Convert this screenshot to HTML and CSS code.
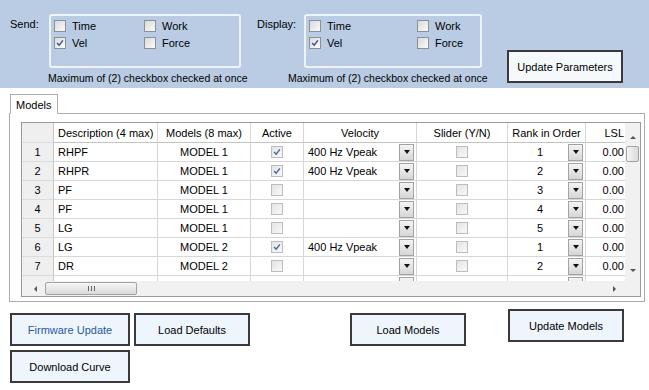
FILE: index.html
```html
<!DOCTYPE html>
<html>
<head>
    <title>Models</title>
    <link rel="stylesheet" href="styles.css">
</head>
<body>

<div class="band">
    <div class="param send">
        <span class="param-label">Send:</span>
        <div class="param-body">
            <div class="group">
                <label class="opt"><span class="cb"></span>Time</label>
                <label class="opt"><span class="cb"></span>Work</label>
                <label class="opt"><span class="cb on"><svg viewBox="0 0 12 12"><path d="M2.5 6 L5 8.6 L9.5 2.8"/></svg></span>Vel</label>
                <label class="opt"><span class="cb"></span>Force</label>
            </div>
            <div class="note">Maximum of (2) checkbox checked at once</div>
        </div>
    </div>
    <div class="param display">
        <span class="param-label">Display:</span>
        <div class="param-body">
            <div class="group">
                <label class="opt"><span class="cb"></span>Time</label>
                <label class="opt"><span class="cb"></span>Work</label>
                <label class="opt"><span class="cb on"><svg viewBox="0 0 12 12"><path d="M2.5 6 L5 8.6 L9.5 2.8"/></svg></span>Vel</label>
                <label class="opt"><span class="cb"></span>Force</label>
            </div>
            <div class="note">Maximum of (2) checkbox checked at once</div>
        </div>
    </div>
    <button class="btn btn-params">Update Parameters</button>
</div>

<div class="tabs">
    <div class="tab">Models</div>
    <div class="panel">
        <div class="grid">
            <div class="grid-main">
                <div class="viewport">
                    <div class="row head">
                        <div class="c rh"></div>
                        <div class="c">Description (4 max)</div>
                        <div class="c mid">Models (8 max)</div>
                        <div class="c mid">Active</div>
                        <div class="c mid">Velocity</div>
                        <div class="c mid">Slider (Y/N)</div>
                        <div class="c mid">Rank in Order</div>
                        <div class="c num">LSL</div>
                    </div>
                    <div class="row">
                        <div class="c rh">1</div>
                        <div class="c">RHPF</div>
                        <div class="c mid">MODEL 1</div>
                        <div class="c mid"><span class="gcb on"><svg viewBox="0 0 12 12"><path d="M2.5 6 L5 8.6 L9.5 2.8"/></svg></span></div>
                        <div class="c combo"><span>400 Hz Vpeak</span><i class="dd"></i></div>
                        <div class="c mid"><span class="gcb"></span></div>
                        <div class="c combo rank"><span>1</span><i class="dd"></i></div>
                        <div class="c num">0.00</div>
                    </div>
                    <div class="row">
                        <div class="c rh">2</div>
                        <div class="c">RHPR</div>
                        <div class="c mid">MODEL 1</div>
                        <div class="c mid"><span class="gcb on"><svg viewBox="0 0 12 12"><path d="M2.5 6 L5 8.6 L9.5 2.8"/></svg></span></div>
                        <div class="c combo"><span>400 Hz Vpeak</span><i class="dd"></i></div>
                        <div class="c mid"><span class="gcb"></span></div>
                        <div class="c combo rank"><span>2</span><i class="dd"></i></div>
                        <div class="c num">0.00</div>
                    </div>
                    <div class="row">
                        <div class="c rh">3</div>
                        <div class="c">PF</div>
                        <div class="c mid">MODEL 1</div>
                        <div class="c mid"><span class="gcb"></span></div>
                        <div class="c combo"><span></span><i class="dd"></i></div>
                        <div class="c mid"><span class="gcb"></span></div>
                        <div class="c combo rank"><span>3</span><i class="dd"></i></div>
                        <div class="c num">0.00</div>
                    </div>
                    <div class="row">
                        <div class="c rh">4</div>
                        <div class="c">PF</div>
                        <div class="c mid">MODEL 1</div>
                        <div class="c mid"><span class="gcb"></span></div>
                        <div class="c combo"><span></span><i class="dd"></i></div>
                        <div class="c mid"><span class="gcb"></span></div>
                        <div class="c combo rank"><span>4</span><i class="dd"></i></div>
                        <div class="c num">0.00</div>
                    </div>
                    <div class="row">
                        <div class="c rh">5</div>
                        <div class="c">LG</div>
                        <div class="c mid">MODEL 1</div>
                        <div class="c mid"><span class="gcb"></span></div>
                        <div class="c combo"><span></span><i class="dd"></i></div>
                        <div class="c mid"><span class="gcb"></span></div>
                        <div class="c combo rank"><span>5</span><i class="dd"></i></div>
                        <div class="c num">0.00</div>
                    </div>
                    <div class="row">
                        <div class="c rh">6</div>
                        <div class="c">LG</div>
                        <div class="c mid">MODEL 2</div>
                        <div class="c mid"><span class="gcb on"><svg viewBox="0 0 12 12"><path d="M2.5 6 L5 8.6 L9.5 2.8"/></svg></span></div>
                        <div class="c combo"><span>400 Hz Vpeak</span><i class="dd"></i></div>
                        <div class="c mid"><span class="gcb"></span></div>
                        <div class="c combo rank"><span>1</span><i class="dd"></i></div>
                        <div class="c num">0.00</div>
                    </div>
                    <div class="row">
                        <div class="c rh">7</div>
                        <div class="c">DR</div>
                        <div class="c mid">MODEL 2</div>
                        <div class="c mid"><span class="gcb"></span></div>
                        <div class="c combo"><span></span><i class="dd"></i></div>
                        <div class="c mid"><span class="gcb"></span></div>
                        <div class="c combo rank"><span>2</span><i class="dd"></i></div>
                        <div class="c num">0.00</div>
                    </div>
                    <!-- next row, only its top edge shows above the scrollbar -->
                    <div class="row">
                        <div class="c rh"></div>
                        <div class="c"></div>
                        <div class="c mid"></div>
                        <div class="c mid"></div>
                        <div class="c combo"><span></span><i class="dd"></i></div>
                        <div class="c mid"></div>
                        <div class="c combo rank"><span></span><i class="dd"></i></div>
                        <div class="c num"></div>
                    </div>
                </div>
                <div class="vscroll">
                    <i class="arr up"></i>
                    <span class="vthumb"></span>
                    <i class="arr down"></i>
                </div>
            </div>
            <div class="grid-foot">
                <div class="hscroll">
                    <i class="arr left"></i>
                    <span class="hthumb"><b></b><b></b><b></b></span>
                    <i class="arr right"></i>
                </div>
                <div class="corner"></div>
            </div>
        </div>
    </div>
</div>

<div class="actions">
    <div class="stack">
        <button class="btn btn-blue">Firmware Update</button>
        <button class="btn">Download Curve</button>
    </div>
    <button class="btn btn-defaults">Load Defaults</button>
    <button class="btn btn-load">Load Models</button>
    <button class="btn btn-update">Update Models</button>
</div>

</body>
</html>
```

FILE: styles.css
```css
body {
    margin: 0;
    padding: 0;
    background: #fff;
    color: #000;
    font-family: 'Liberation Sans', Arial, sans-serif;
    font-size: 11px;
}

/* top parameter band */
.band {
    display: flex;
    align-items: flex-start;
    height: 88px;
    box-sizing: border-box;
    padding: 14px 0 0 10px;
    background: #b9cce3;
}
.param {
    display: flex;
    align-items: flex-start;
}
.param-label {
    padding-top: 4px;
}
.send .param-label { width: 39px; }
.send .param-body { width: 199px; }
.send .group { width: 192px; }
.send .note { margin-left: -1px; }

.display { margin-left: 9px; }
.display .param-label { width: 47px; }
.display .param-body { width: 178px; }
.display .group { width: 178px; grid-template-columns: 108px 1fr; }
.display .note { margin-left: -16px; }

.group {
    display: grid;
    grid-template-columns: 90px 1fr;
    grid-auto-rows: 17px;
    height: 54px;
    box-sizing: border-box;
    padding: 1px 0 0 3px;
    border: 2px solid #eef3f9;
    border-radius: 3px;
}
.opt {
    display: flex;
    align-items: center;
}
.cb {
    width: 12px;
    height: 12px;
    box-sizing: border-box;
    margin-right: 6px;
    border: 1px solid #8d8f92;
    background: linear-gradient(135deg, #d9dadc, #fafafa);
    display: inline-flex;
}
.cb svg, .gcb svg {
    width: 100%;
    height: 100%;
    fill: none;
    stroke: #2f4f8f;
    stroke-width: 1.6;
}
.note {
    margin-top: 4px;
    white-space: nowrap;
    line-height: 13px;
    font-size: 10.5px;
}

.btn {
    font-family: 'Liberation Sans', Arial, sans-serif;
    font-size: 11px;
    color: #000;
    background: #eef5fc;
    border: 2px solid #3a3a3a;
    width: 116px;
    height: 33px;
    padding: 0;
}
.btn-params {
    margin: 36px 0 0 25px;
    background: #f6f9fc;
}

/* tab + grid */
.tabs {
    margin: 6px 4px 0 9px;
}
.tab {
    position: relative;
    z-index: 1;
    display: inline-block;
    margin: 0 0 -1px 1px;
    width: 48px;
    height: 20px;
    box-sizing: border-box;
    padding: 4px 0 0 5px;
    border: 1px solid #ababab;
    border-bottom: 1px solid #fff;
    background: #fff;
}
.panel {
    height: 189px;
    box-sizing: border-box;
    padding: 8px 0 0 11px;
    border: 1px solid #ababab;
}
.grid {
    width: 620px;
    height: 175px;
    box-sizing: border-box;
    border: 1px solid #9a9a9a;
}
.grid-main {
    display: flex;
    height: 158px;
}
.viewport {
    width: 603px;
    overflow: hidden;
}
.row {
    display: grid;
    grid-template-columns: 32px 104px 93px 53px 113px 91px 78px 41px;
    height: 19px;
}
.row.head {
    height: 20px;
}
.c {
    display: flex;
    align-items: center;
    box-sizing: border-box;
    padding: 0 4px;
    border-right: 1px solid #d7d7d7;
    border-bottom: 1px solid #d7d7d7;
    white-space: nowrap;
    overflow: hidden;
}
.head .c {
    border-bottom-color: #c4c4c4;
}
.c.mid { justify-content: center; }
.c.num { justify-content: flex-end; padding-right: 2px; }
.c.rh {
    justify-content: center;
    background: #efefef;
    border-right-color: #c6c6c6;
    border-bottom-color: #dcdcdc;
}
.combo {
    justify-content: space-between;
    padding-right: 2px;
}
.rank span {
    flex: 1;
    text-align: center;
}
.dd {
    width: 15px;
    height: 17px;
    box-sizing: border-box;
    border: 1px solid #a3a3a3;
    background: linear-gradient(#f4f4f4, #d6d6d6);
    display: flex;
    align-items: center;
    justify-content: center;
}
.dd::after {
    content: "";
    border-left: 3.5px solid transparent;
    border-right: 3.5px solid transparent;
    border-top: 4px solid #111;
}
.gcb {
    width: 12px;
    height: 12px;
    box-sizing: border-box;
    border: 1px solid #bdbdbd;
    background: linear-gradient(135deg, #e4e4e4, #f8f8f8);
    display: inline-flex;
}
.gcb svg { stroke: #4563a3; }

/* scrollbars */
.vscroll {
    width: 15px;
    display: flex;
    flex-direction: column;
    align-items: center;
    background: #f1f1f1;
}
.vthumb {
    width: 13px;
    height: 16px;
    margin-top: 7px;
    box-sizing: border-box;
    border: 1px solid #a3a3a3;
    border-radius: 2px;
    background: linear-gradient(to right, #f5f5f5, #dadada);
}
.arr {
    width: 0;
    height: 0;
}
.arr.up {
    margin-top: 13px;
    border-left: 3px solid transparent;
    border-right: 3px solid transparent;
    border-bottom: 3px solid #555;
}
.arr.down {
    margin-top: auto;
    margin-bottom: 9px;
    border-left: 3px solid transparent;
    border-right: 3px solid transparent;
    border-top: 3px solid #555;
}
.grid-foot {
    display: flex;
    height: 15px;
}
.hscroll {
    width: 603px;
    display: flex;
    align-items: center;
    background: #f1f1f1;
}
.arr.left {
    margin-left: 12px;
    border-top: 3px solid transparent;
    border-bottom: 3px solid transparent;
    border-right: 3px solid #555;
}
.arr.right {
    margin-left: auto;
    margin-right: 9px;
    border-top: 3px solid transparent;
    border-bottom: 3px solid transparent;
    border-left: 3px solid #555;
}
.hthumb {
    display: flex;
    align-items: center;
    justify-content: center;
    gap: 2px;
    width: 92px;
    height: 13px;
    margin-left: 8px;
    box-sizing: border-box;
    border: 1px solid #a3a3a3;
    border-radius: 2px;
    background: linear-gradient(#f5f5f5, #dadada);
}
.hthumb b {
    width: 1px;
    height: 5px;
    background: #666;
}
.corner {
    width: 15px;
    background: #f1f1f1;
}

/* bottom buttons */
.actions {
    display: flex;
    align-items: flex-start;
    margin-top: 11px;
    padding-left: 10px;
}
.stack {
    display: flex;
    flex-direction: column;
    gap: 4px;
}
.stack .btn { width: 120px; }
.btn-blue { color: #2659a0; }
.btn-defaults { margin-left: 4px; }
.btn-load { margin-left: 100px; }
.btn-update { margin: -4px 0 0 42px; }
```
